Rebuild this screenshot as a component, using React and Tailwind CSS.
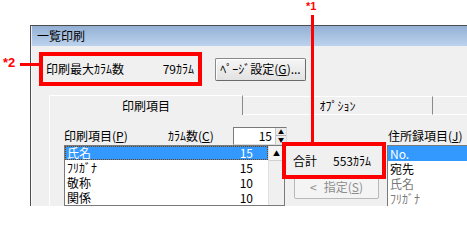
import React from "react";

const leftRows = [
  { name: "氏名", cols: "15", selected: true },
  { name: "ﾌﾘｶﾞﾅ", cols: "15" },
  { name: "敬称", cols: "10" },
  { name: "関係", cols: "10" },
];

const rightRows = [
  { name: "No.", selected: true },
  { name: "宛先" },
  { name: "氏名", dim: true },
  { name: "ﾌﾘｶﾞﾅ", dim: true },
];

function SpinBox() {
  return (
    <div className="flex h-[18px] w-[54px] border border-t-[#7a7a7a] border-l-[#7a7a7a] border-r-[#dcdcdc] border-b-[#dcdcdc] bg-white">
      <div className="flex-1 flex items-center justify-end pr-[3px] leading-none">15</div>
      <div className="flex w-[11px] flex-col border-l border-[#c8c8c8] bg-[#ececec]">
        <div className="flex h-1/2 items-center justify-center border-b border-[#b0b0b0] text-[6px] leading-none">▲</div>
        <div className="flex h-1/2 items-center justify-center text-[6px] leading-none">▼</div>
      </div>
    </div>
  );
}

export default function App() {
  return (
    <div className="relative h-[206px] w-[467px] overflow-hidden bg-white font-['Noto_Sans_CJK_JP',sans-serif] text-[12px] text-black">
      {/* callouts */}
      <span className="absolute left-[3px] top-[56px] font-['Liberation_Sans',sans-serif] text-[13px] font-bold leading-none text-[#ff0000]">
        *2
      </span>
      <div className="absolute left-[20px] top-[63px] h-[3px] w-[19px] bg-[#ff0000]" />
      <span className="absolute left-[306px] top-[1px] font-['Liberation_Sans',sans-serif] text-[11px] font-bold leading-none text-[#ff0000]">
        *1
      </span>
      <div className="absolute left-[311px] top-[15px] z-10 h-[128px] w-[3px] bg-[#ff0000]" />
      <div className="absolute left-[282px] top-[142px] z-10 flex h-[37px] w-[104px] items-center border-4 border-[#ff0000] bg-[#f0f0f0] pl-[7px] leading-none">
        <span>合計</span>
        <span className="ml-[16px]">553ｶﾗﾑ</span>
      </div>

      {/* dialog */}
      <div className="ml-[30px] mt-[25px] flex h-[181px] w-[437px] flex-col border-l border-t border-[#4d4d4d] bg-[#f0f0f0]">
        <div className="flex h-[23px] items-center border-l border-[#e8eef6] bg-linear-to-b from-[#93b0d4] to-[#bcd3ed] pl-[5px] leading-none">
          一覧印刷
        </div>

        <div className="flex flex-1 flex-col border-l border-[#fafafa] pl-[7px] pt-[6px]">
          <div className="flex items-center">
            <div className="flex h-[34px] w-[163px] items-center justify-between border-4 border-[#ff0000] pl-[3px] pr-[4px] leading-none">
              <span>印刷最大ｶﾗﾑ数</span>
              <span>79ｶﾗﾑ</span>
            </div>
            <button className="ml-[13px] flex h-[23px] w-[91px] items-center justify-center rounded-[2px] border border-[#8a8a8a] border-b-[#6a6a6a] border-r-[#6a6a6a] bg-linear-to-b from-[#f6f6f6] to-[#e2e2e2] leading-none shadow-[inset_1px_1px_0_#ffffff]">
              ﾍﾟｰｼﾞ設定(<span className="underline">G</span>)...
            </button>
          </div>

          {/* tabs */}
          <div className="ml-[10px] mt-[9px] flex flex-1 flex-col">
            <div className="flex h-[20px] items-end">
              <div className="flex h-[20px] w-[194px] items-center justify-center rounded-tl-[2px] border-l border-t border-r border-l-white border-t-white border-r-[#8a8a8a] leading-none">
                印刷項目
              </div>
              <div className="flex h-[19px] w-[190px] items-center justify-center border-t border-r border-t-white border-r-[#8a8a8a] border-b border-b-white leading-none">
                ｵﾌﾟｼｮﾝ
              </div>
              <div className="h-[19px] flex-1 border-t border-b border-t-white border-b-white" />
            </div>

            <div className="flex flex-1 border-l border-white pl-[14px] pt-[12px]">
              {/* print items */}
              <div className="flex w-[223px] flex-col">
                <div className="flex h-[18px] items-center leading-none">
                  <span className="w-[104px]">
                    印刷項目(<span className="underline">P</span>)
                  </span>
                  <span className="w-[65px]">
                    ｶﾗﾑ数(<span className="underline">C</span>)
                  </span>
                  <SpinBox />
                </div>
                <div className="flex w-[221px] flex-1 border border-[#7a7a7a] bg-white">
                  <div className="flex-1">
                    {leftRows.map((r) => (
                      <div
                        key={r.name}
                        className={
                          r.selected
                            ? "flex h-[14px] items-center justify-between border border-dotted border-[#7a3d00] bg-[#3399ff] pl-[1px] pr-[14px] leading-none text-white"
                            : "flex h-[15px] items-center justify-between pl-[2px] pr-[15px] leading-none"
                        }
                      >
                        <span>{r.name}</span>
                        <span>{r.cols}</span>
                      </div>
                    ))}
                  </div>
                  <div className="flex w-[16px] flex-col border-l border-[#e0e0e0] bg-[#f0f0f0]">
                    <div className="flex h-[15px] items-center justify-center border-b border-[#d0d0d0] bg-[#f4f4f4] text-[7px] leading-none">
                      ▲
                    </div>
                  </div>
                </div>
              </div>

              {/* middle */}
              <div className="flex w-[100px] flex-col pl-[7px] pt-[48px]">
                <button className="flex h-[24px] w-[85px] items-center justify-center gap-[7px] rounded-[2px] border border-[#b8b8b8] bg-[#f4f4f4] leading-none text-[#8d8d8d]">
                  <span>&lt;</span>
                  <span>
                    指定(<span className="underline">S</span>)
                  </span>
                </button>
              </div>

              {/* address items */}
              <div className="flex flex-1 flex-col">
                <div className="flex h-[18px] items-center pl-[1px] leading-none">
                  住所録項目(<span className="underline">J</span>)
                </div>
                <div className="flex-1 border-l border-t border-[#7a7a7a] bg-white">
                  {rightRows.map((r) => (
                    <div
                      key={r.name}
                      className={
                        r.selected
                          ? "flex h-[15px] items-center bg-[#3399ff] pl-[2px] leading-none text-white"
                          : r.dim
                          ? "flex h-[15px] items-center pl-[2px] leading-none text-[#7a7a7a]"
                          : "flex h-[15px] items-center pl-[2px] leading-none"
                      }
                    >
                      {r.name}
                    </div>
                  ))}
                </div>
              </div>
            </div>
          </div>
        </div>
      </div>
    </div>
  );
}
